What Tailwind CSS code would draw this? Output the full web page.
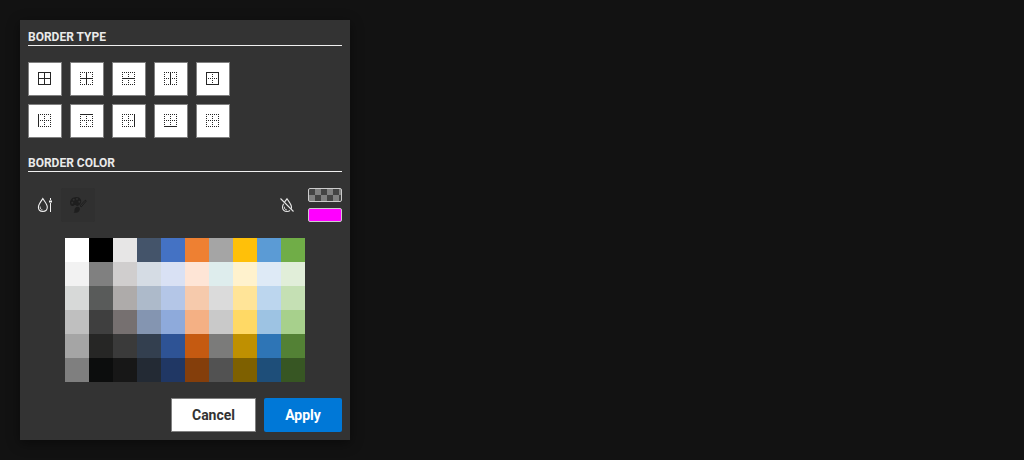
<!DOCTYPE html>
<html lang="en">
<head>
<meta charset="utf-8">
<title>Borders</title>
<script src="https://cdn.jsdelivr.net/npm/@tailwindcss/browser@4"></script>
</head>
<body class="bg-[#121212] h-[460px] overflow-hidden p-5 font-['Roboto',sans-serif]">
<div class="w-[330px] h-[420px] bg-[#333333] px-2 flex flex-col shadow-[0_3px_12px_rgba(0,0,0,0.45)]">
  <h2 class="h-[26px] pt-[9px] border-b border-[#f0f0f0] text-xs leading-4 font-bold text-[#eaeaea] shrink-0">BORDER TYPE</h2>
  <div id="types" class="mt-4 grid grid-cols-[repeat(5,34px)] gap-2"></div>
  <h2 class="h-[34px] pt-[17px] border-b border-[#f0f0f0] text-xs leading-4 font-bold text-[#eaeaea] shrink-0">BORDER COLOR</h2>
  <div class="mt-4 h-[34px] flex shrink-0">
    <button class="size-[34px] shrink-0" aria-label="Color picker">
      <svg width="34" height="34" fill="none" stroke="#f0f0f0" stroke-width="1.1">
        <path d="M14.8 10.6C13 13.4 10.4 16.5 10.4 19.1C10.4 21.9 12.2 23.5 14.8 23.5S19.3 21.9 19.3 19.1C19.3 16.5 16.6 13.4 14.8 10.6Z"/>
        <path d="M12.2 18.5C12 20.5 13 21.8 14.6 22" stroke-width=".8"/>
        <path d="M22.5 10V12M22.5 15V24" stroke-width="1"/><path d="M21 13.5H24" stroke-width="2"/>
      </svg>
    </button>
    <button class="size-[34px] -ml-px shrink-0 bg-[#303030] rounded-[2px]" aria-label="Palette">
      <svg width="34" height="34" fill="#1e1e1e">
        <path fill-rule="evenodd" d="M15.5 9C11.5 9 8.8 11.8 9 15C9.1 18 11.5 18.5 13 17.4C14.2 16.5 15.1 17.2 15.8 18C17.7 18.2 20.3 15.8 20.2 13C20.1 10.7 18.4 9 15.5 9ZM11.3 13.8a1 1 0 1 0 0 2a1 1 0 0 0 0-2ZM12.7 10.8a1 1 0 1 0 0 2a1 1 0 0 0 0-2ZM16 10a1 1 0 1 0 0 2a1 1 0 0 0 0-2ZM18.3 12.7a1 1 0 1 0 0 2a1 1 0 0 0 0-2Z"/>
        <path d="M19 17.9L24 12.4Q25.1 12 25.2 13.2L20.3 18.9Z" fill="#303030" stroke="#1e1e1e" stroke-width="1"/>
        <path d="M18 19C19.4 20 19.1 22.3 17.6 23.7C16.2 25 13.8 25 12.4 24.4C14.2 23.8 13 22 13.9 20.4C14.8 18.8 16.6 18.2 18 19Z"/>
      </svg>
    </button>
    <button class="size-[34px] ml-auto mr-1 shrink-0" aria-label="No color">
      <svg width="34" height="34" fill="none" stroke="#e6e6e6" stroke-width="1.1">
        <path d="M14.5 14.2L17 10.8C18.6 13.3 21.5 16.6 21.5 19.2C21.5 19.8 21.4 20.3 21.2 20.8M20 22.5C19.2 23.2 18.2 23.5 17 23.5C14.3 23.5 12.5 21.8 12.5 19.2C12.5 18 13 16.9 13.6 15.8"/>
        <path d="M14.4 18.7C14.2 20.5 15.2 21.9 17 22" stroke-width=".9"/>
        <path d="M10.5 10.5L23.5 23.5"/>
      </svg>
    </button>
    <div class="w-[34px] flex flex-col gap-1.5 shrink-0">
      <div class="h-[14px] border border-[#cccccc] rounded-[2px] bg-[conic-gradient(#808080_25%,#444_0_50%,#808080_0_75%,#444_0)] bg-[length:12px_12px] bg-[position:0_0]"></div>
      <div class="h-[14px] border border-[#cccccc] rounded-[2px] bg-[#ff00ff]"></div>
    </div>
  </div>
  <div id="palette" class="mt-4 self-center w-60 h-36 grid grid-cols-10 auto-rows-[24px] shrink-0"></div>
  <div class="mt-4 flex justify-end gap-2">
    <button class="w-[85px] h-[34px] border border-[#808080] bg-white text-[#333333] text-sm leading-5 font-bold">Cancel</button>
    <button class="w-[78px] h-[34px] rounded-[2px] bg-[#0078d7] text-white text-sm leading-5 font-bold">Apply</button>
  </div>
</div>
<script>
const lines = {
  l: 'M.5 0V13', r: 'M12.5 0V13', t: 'M0 .5H13', b: 'M0 12.5H13',
  v: 'M6.5 0V13', h: 'M0 6.5H13'
};
const types = [
  ['All', 'lrtbvh'], ['Inside', 'vh'], ['Horizontal', 'h'], ['Vertical', 'v'], ['Outside', 'lrtb'],
  ['Left', 'l'], ['Top', 't'], ['Right', 'r'], ['Bottom', 'b'], ['None', '']
];
document.getElementById('types').innerHTML = types.map(([name, solid]) => {
  const dots = [...'lrtbvh'].filter(k => !solid.includes(k)).map(k => lines[k]).join('');
  const full = [...solid].map(k => lines[k]).join('');
  return `<button class="size-[34px] flex items-start bg-white border border-[#808080] p-[9px]" aria-label="${name}"><svg class="block" width="13" height="13" stroke="#262626" shape-rendering="crispEdges"><path d="${dots}" stroke-dasharray="1 1"/><path d="${full}"/></svg></button>`;
}).join('');
const colors = `ffffff 000000 e7e6e6 44546a 4472c4 ee8032 a5a5a5 ffc009 5b9bd5 70ad47
f2f2f2 808080 d0cece d5dce4 d9e1f4 fee5d6 deeded fff2cd deeaf6 e1eed9
d7d9d8 595b5a aeabaa adbaca b4c6e7 f6caac dbdbdb ffe498 bcd6ee c5e0b4
bfbfbf 3f3f3f 767070 8495b1 8eaadb f4b084 c9c9c9 ffd965 9dc3e3 a7d08c
a5a5a5 262625 3a3a3a 333f4f 2e5395 c55a11 7b7b7a bf9001 2e75b6 538135
7f7f7f 0c0d0d 171717 232a34 203764 843e0b 525252 7e6000 1e4e79 375623`.split(/\s+/);
document.getElementById('palette').innerHTML = colors.map(c => `<div style="background:#${c}"></div>`).join('');
</script>
</body>
</html>
